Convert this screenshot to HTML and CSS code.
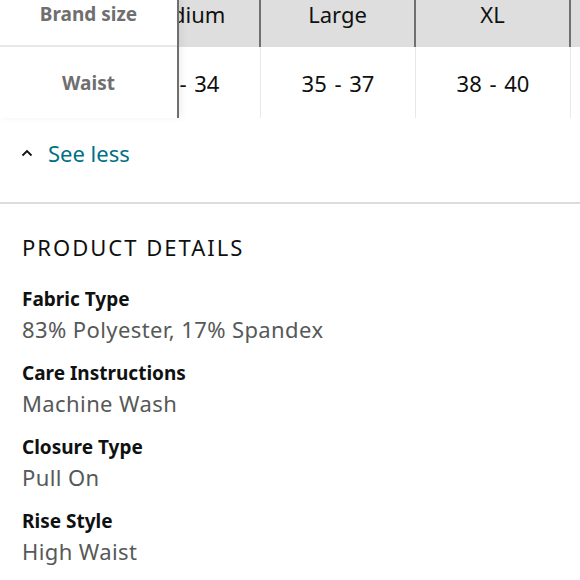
FILE: index.html
```html
<!DOCTYPE html>
<html>
<head>
<meta charset="utf-8">
<link rel="stylesheet" href="styles.css">
</head>
<body>
<div class="size-table">
  <div class="sticky-col">
    <div class="cell head-cell label">Brand size</div>
    <div class="cell body-cell label">Waist</div>
  </div>
  <div class="scroller">
    <div class="scroll-inner">
      <div class="col">
        <div class="cell head-cell">Medium</div>
        <div class="cell body-cell">31 - 34</div>
      </div>
      <div class="col">
        <div class="cell head-cell">Large</div>
        <div class="cell body-cell">35 - 37</div>
      </div>
      <div class="col">
        <div class="cell head-cell">XL</div>
        <div class="cell body-cell">38 - 40</div>
      </div>
      <div class="col">
        <div class="cell head-cell">XXL</div>
        <div class="cell body-cell">41 - 43</div>
      </div>
    </div>
  </div>
</div>

<div class="see-less">
  <svg class="chev" width="12" height="8" viewBox="0 0 12 8"><path d="M1.5 6.5 L6 2 L10.5 6.5" fill="none" stroke="#111" stroke-width="1.8"/></svg>
  <span class="link">See less</span>
</div>

<div class="divider"></div>

<section class="details">
  <h2 class="heading">PRODUCT DETAILS</h2>
  <div class="item">
    <div class="item-label">Fabric Type</div>
    <div class="item-value">83% Polyester, 17% Spandex</div>
  </div>
  <div class="item">
    <div class="item-label">Care Instructions</div>
    <div class="item-value">Machine Wash</div>
  </div>
  <div class="item">
    <div class="item-label">Closure Type</div>
    <div class="item-value">Pull On</div>
  </div>
  <div class="item">
    <div class="item-label">Rise Style</div>
    <div class="item-value">High Waist</div>
  </div>
</section>
</body>
</html>
```

FILE: styles.css
```css
* { box-sizing: border-box; }
body {
  margin: 0;
  background: #fff;
  font-family: "Noto Sans", "Open Sans", sans-serif;
  color: #0f1111;
  overflow: hidden;
}
.size-table {
  display: flex;
  height: 118px;
}
.sticky-col {
  width: 179px;
  flex: none;
  border-right: 2px solid #6e6e6e;
  display: flex;
  flex-direction: column;
  position: relative;
  z-index: 1;
  box-shadow: 3px 0 6px rgba(0,0,0,0.06);
}
.cell {
  display: flex;
  justify-content: center;
  font-size: 22px;
  word-spacing: 2px;
  color: #0f1111;
  white-space: nowrap;
}
.head-cell {
  height: 47px;
  align-items: flex-start;
  line-height: 28px;
}
.body-cell {
  height: 71px;
  align-items: center;
  line-height: 28px;
}
.sticky-col .head-cell {
  border-bottom: 2px solid #e8e8e8;
}
.label {
  font-weight: 700;
  font-size: 19px;
  word-spacing: 0;
  color: #6f6f6f;
}
.scroller {
  flex: 1;
  overflow: hidden;
}
.scroll-inner {
  display: flex;
  margin-left: -73px;
}
.col {
  width: 155px;
  flex: none;
  display: flex;
  flex-direction: column;
}
.col .head-cell {
  background: #dedede;
  border-right: 2px solid #707070;
}
.col .body-cell {
  border-right: 1px solid #e8e8e8;
}
.see-less {
  display: flex;
  align-items: center;
  margin-top: 20px;
  padding-left: 21px;
  height: 30px;
}
.chev {
  margin-right: 15px;
}
.link {
  color: #007185;
  font-size: 22px;
  line-height: 30px;
}
.divider {
  margin-top: 34px;
  height: 2px;
  background: #dcdcdc;
}
.details {
  padding: 28px 22px 0;
}
.heading {
  margin: 0 0 22px;
  font-weight: 400;
  font-size: 22px;
  line-height: 30px;
  letter-spacing: 2px;
  color: #0f1111;
}
.item {
  margin-bottom: 14px;
}
.item-label {
  font-weight: 700;
  font-size: 19px;
  line-height: 30px;
  color: #0f1111;
}
.item-value {
  font-size: 22px;
  letter-spacing: 0.4px;
  line-height: 30px;
  color: #565959;
}
```
